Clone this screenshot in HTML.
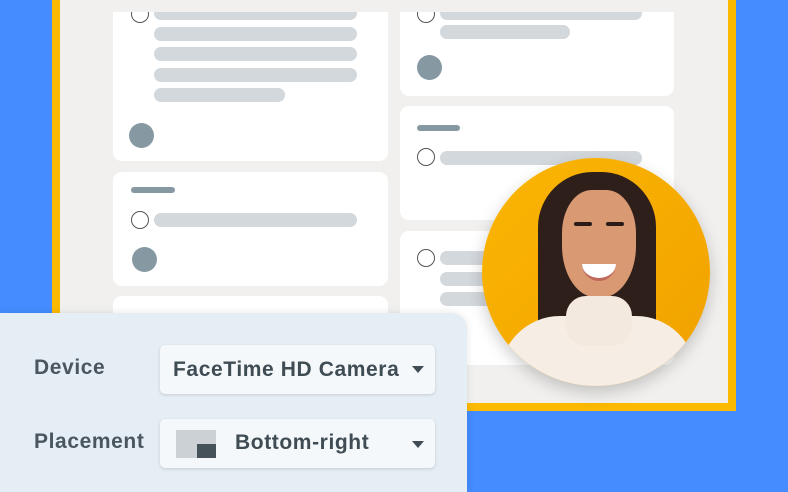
<!DOCTYPE html><html><head><style>
html,body{margin:0;width:788px;height:492px;overflow:hidden}
body{background:#448cff;position:relative;font-family:"Liberation Sans",sans-serif}
.a{position:absolute}
.frame{left:52px;top:-10px;width:668px;height:413px;border:8px solid #fbb901;border-top:none;background:#f1f0ee}
.clip{left:60px;top:12px;width:668px;height:391px;overflow:hidden}
.card{position:absolute;background:#fff;border-radius:9px}
.bar{position:absolute;height:14px;border-radius:7px;background:#d3d8dc}
.lb{position:absolute;height:6px;border-radius:3px;background:#8699a3}
.rad{position:absolute;width:16px;height:16px;border:1.3px solid #555;border-radius:50%;background:#fff}
.av{position:absolute;width:25px;height:25px;border-radius:50%;background:#8699a3}
.panel{left:0;top:313px;width:467px;height:179px;background:#e6eef5;border-top-right-radius:16px;box-shadow:0 0 8px rgba(0,0,0,.1)}
.lbl{position:absolute;font-size:21px;color:#4a575f;font-weight:bold;letter-spacing:0.6px}
.sel{position:absolute;left:160px;width:275px;height:49px;background:#f4f8fb;border-radius:5px;box-shadow:0 1px 3px rgba(0,0,0,.15);font-size:21px;color:#3f4c54;font-weight:bold;letter-spacing:0.6px}
.tri{position:absolute;width:0;height:0;border-left:6px solid transparent;border-right:6px solid transparent;border-top:7px solid #3f4c54}
</style></head><body>
<div class="a frame"></div>
<div class="a clip">
 <div class="card" style="left:53px;top:-20px;width:275px;height:169px">
  <div class="rad" style="left:18px;top:13px"></div>
  <div class="bar" style="left:41px;top:14px;width:203px"></div>
  <div class="bar" style="left:41px;top:35px;width:203px"></div>
  <div class="bar" style="left:41px;top:55px;width:203px"></div>
  <div class="bar" style="left:41px;top:76px;width:203px"></div>
  <div class="bar" style="left:41px;top:96px;width:131px"></div>
  <div class="av" style="left:16px;top:131px"></div>
 </div>
 <div class="card" style="left:53px;top:160px;width:275px;height:114px">
  <div class="lb" style="left:18px;top:15px;width:44px"></div>
  <div class="rad" style="left:18px;top:39px"></div>
  <div class="bar" style="left:41px;top:41px;width:203px"></div>
  <div class="av" style="left:19px;top:75px"></div>
 </div>
 <div class="card" style="left:53px;top:284px;width:275px;height:120px"></div>
 <div class="card" style="left:340px;top:-20px;width:274px;height:104px">
  <div class="rad" style="left:17px;top:13px"></div>
  <div class="bar" style="left:40px;top:14px;width:202px"></div>
  <div class="bar" style="left:40px;top:33px;width:130px"></div>
  <div class="av" style="left:17px;top:63px"></div>
 </div>
 <div class="card" style="left:340px;top:94px;width:274px;height:114px">
  <div class="lb" style="left:17px;top:19px;width:43px"></div>
  <div class="rad" style="left:17px;top:42px"></div>
  <div class="bar" style="left:40px;top:45px;width:202px"></div>
 </div>
 <div class="card" style="left:340px;top:219px;width:274px;height:134px">
  <div class="rad" style="left:17px;top:18px"></div>
  <div class="bar" style="left:40px;top:20px;width:202px"></div>
  <div class="bar" style="left:40px;top:41px;width:202px"></div>
  <div class="bar" style="left:40px;top:61px;width:202px"></div>
 </div>
</div>
<div class="a" style="left:482px;top:158px;width:228px;height:228px;border-radius:50%;overflow:hidden;background:linear-gradient(135deg,#fbb602,#f0a100);box-shadow:0 6px 16px rgba(0,0,0,.2)">
 <div class="a" style="left:56px;top:14px;width:118px;height:170px;border-radius:55px 55px 10px 10px;background:#2e1f1a"></div>
 <div class="a" style="left:80px;top:32px;width:74px;height:108px;border-radius:40% 40% 48% 48%;background:#d99a73"></div>
 <div class="a" style="left:92px;top:64px;width:18px;height:4px;border-radius:2px;background:#2b1c16"></div>
 <div class="a" style="left:124px;top:64px;width:18px;height:4px;border-radius:2px;background:#2b1c16"></div>
 <div class="a" style="left:100px;top:106px;width:34px;height:14px;border-radius:0 0 17px 17px;background:#fff;border-bottom:3px solid #c0685a"></div>
 <div class="a" style="left:18px;top:158px;width:196px;height:110px;border-radius:60px 60px 0 0;background:#f6ede4"></div>
 <div class="a" style="left:84px;top:138px;width:66px;height:50px;border-radius:20px;background:#f3e9df"></div>
</div>
<div class="a panel">
 <div class="lbl" style="left:34px;top:43px">Device</div>
 <div class="lbl" style="left:34px;top:117px">Placement</div>
 <div class="sel" style="top:32px"><span class="a" style="left:13px;top:13px">FaceTime HD Camera</span><div class="tri" style="left:252px;top:21px"></div></div>
 <div class="sel" style="top:106px">
  <div class="a" style="left:16px;top:11px;width:40px;height:28px;background:#ccd1d5"></div>
  <div class="a" style="left:37px;top:25px;width:19px;height:14px;background:#45525a"></div>
  <span class="a" style="left:75px;top:12px">Bottom-right</span><div class="tri" style="left:252px;top:22px"></div></div>
</div>
</body></html>
